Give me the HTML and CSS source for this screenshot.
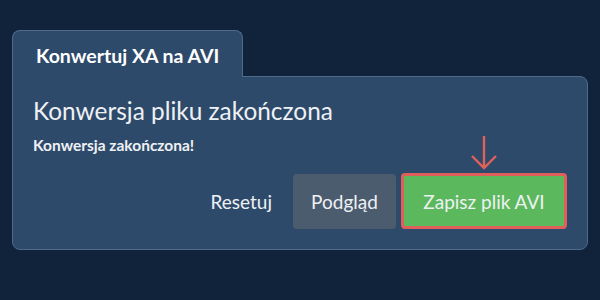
FILE: index.html
```html
<!DOCTYPE html>
<html lang="pl">

<head>
    <meta charset="UTF-8">
    <meta name="viewport" content="width=device-width, initial-scale=1.0">
    <title>Konwertuj XA na AVI</title>
    <link rel="stylesheet" href="styles.css">
</head>

<body>
    <div class="wrap">
        <div class="tab">Konwertuj XA na AVI</div>
        <div class="panel">
            <h2>Konwersja pliku zakończona</h2>
            <p class="status">Konwersja zakończona!</p>
            <div class="actions">
                <button class="btn btn-link" type="reset">Resetuj</button>
                <button class="btn btn-gray">Podgląd</button>
                <div class="save">
                    <svg class="arrow" width="30" height="36" viewBox="0 0 30 36">
                        <path d="M15 1 V33 M3 21 L15 33 L27 21" fill="none" stroke="#e0605a" stroke-width="2.4" />
                    </svg>
                    <button class="btn btn-green">Zapisz plik AVI</button>
                </div>
            </div>
        </div>
    </div>
</body>

</html>
```

FILE: styles.css
```css
* {
    margin: 0;
    padding: 0;
    box-sizing: border-box;
}

body {
    background-color: #11233a;
    font-family: Lato, "Open Sans", sans-serif;
    color: #eef1f4;
}

.wrap {
    padding: 30px 12px 0 12px;
}

.tab {
    display: inline-block;
    width: 231px;
    height: 47px;
    padding: 0 0 0 23px;
    line-height: 50px;
    font-size: 19.5px;
    font-weight: bold;
    color: #ffffff;
    background-color: #2e4a6b;
    border: 1px solid #4e6b8c;
    border-bottom: none;
    border-radius: 8px 8px 0 0;
    position: relative;
    z-index: 1;
    margin-bottom: -1px;
}

.panel {
    background-color: #2e4a6b;
    border: 1px solid #4e6b8c;
    border-radius: 0 8px 8px 8px;
    padding: 18px 20px 20px 20px;
    height: 174px;
}

.panel h2 {
    font-size: 24.4px;
    font-weight: normal;
    line-height: 32px;
}

.status {
    font-size: 15.5px;
    font-weight: bold;
    margin-top: 9px;
    line-height: 18px;
}

.actions {
    display: flex;
    justify-content: flex-end;
    align-items: center;
    margin-top: 19px;
}

.btn {
    font-family: Lato, "Open Sans", sans-serif;
    font-size: 19px;
    color: #eef1f4;
    border: none;
    height: 55px;
    border-radius: 4px;
    cursor: pointer;
}

.btn-link {
    background: none;
    padding: 0 21px 0 0;
}

.btn-gray {
    background-color: #4b5c6e;
    width: 103px;
}

.save {
    position: relative;
    margin-left: 5px;
}

.arrow {
    position: absolute;
    left: 68px;
    top: -38px;
}

.btn-green {
    background-color: #5cb85c;
    border: 3px solid #df5f5a;
    width: 166px;
    height: 56px;
    border-radius: 4px;
}
```
